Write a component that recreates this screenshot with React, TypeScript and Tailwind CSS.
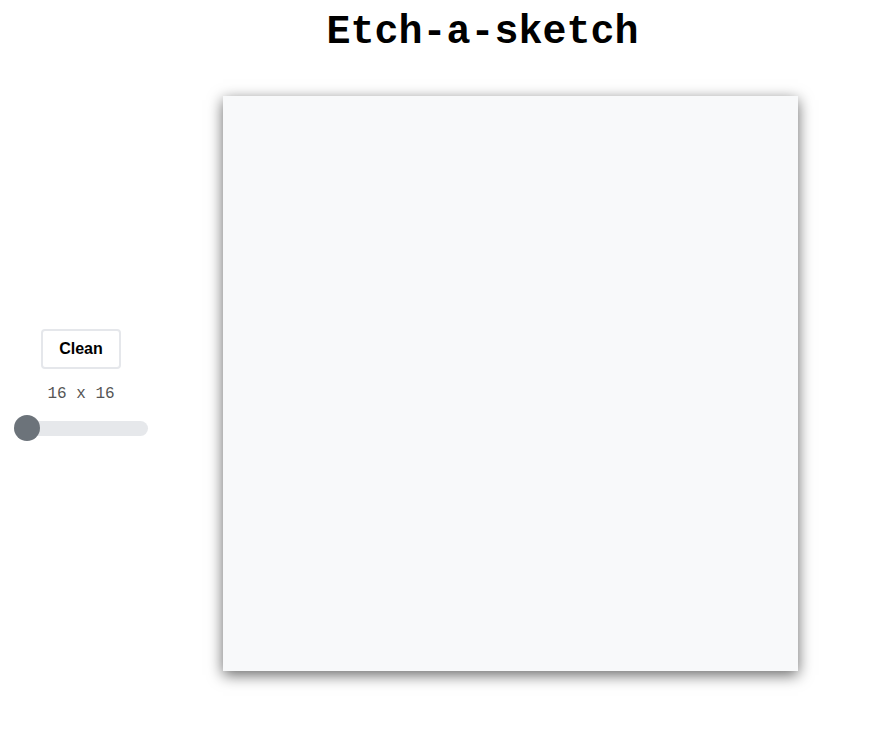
const App = () => {
  return (
    <div className="min-h-screen bg-white text-black">
      <h1 className="pl-[90px] pt-[9px] text-center text-[40px] font-bold leading-[48px] font-['Liberation_Mono','Courier_New',monospace]">
        Etch-a-sketch
      </h1>

      <div className="mt-[39px] flex items-center">
        <div className="flex w-[162px] flex-col items-center pb-[2px]">
          <button className="h-10 w-20 rounded border-2 border-gray-200 bg-white text-base font-bold font-['Liberation_Sans',Arial,sans-serif]">
            Clean
          </button>
          <p className="mt-[13px] text-base leading-6 text-[#555] font-['Liberation_Mono','Courier_New',monospace]">
            16 x 16
          </p>
          <div className="relative mt-[15px] h-[15px] w-[133px] rounded-full bg-[#e6e8eb]">
            <span className="absolute -left-[1px] top-[-6px] h-[26px] w-[26px] rounded-full bg-[#6c737a]" />
          </div>
        </div>

        <div className="ml-[61px] h-[575px] w-[575px] bg-[#f8f9fa] shadow-[0_4px_14px_rgba(0,0,0,0.6)]" />
      </div>
    </div>
  );
};

export default App;
